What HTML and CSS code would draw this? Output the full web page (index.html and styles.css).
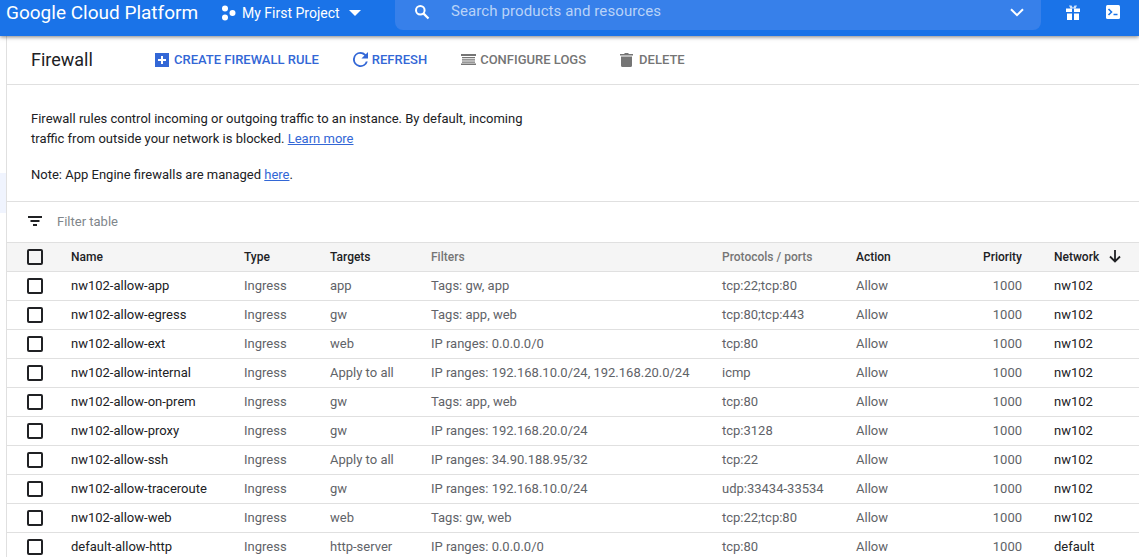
FILE: index.html
```html
<!DOCTYPE html>
<html lang="en">
<head>
    <meta charset="UTF-8">
    <meta name="viewport" content="width=device-width, initial-scale=1.0">
    <title>Firewall</title>
    <link rel="stylesheet" href="styles.css">
</head>
<body>
    <header class="topbar">
        <span class="brand">Google Cloud Platform</span>
        <span class="project">
            <svg class="project-icon" width="18" height="18" viewBox="0 0 18 18"><circle cx="5" cy="4.5" r="3" fill="#fff"/><circle cx="12.5" cy="9" r="3" fill="#fff"/><circle cx="5" cy="13.5" r="3" fill="#fff"/></svg>
            <span class="project-name">My First Project</span>
            <svg class="project-caret" width="12" height="6" viewBox="0 0 12 6"><path d="M0 0h12L6 6z" fill="#fff"/></svg>
        </span>
        <div class="search">
            <svg class="search-icon" width="16" height="16" viewBox="0 0 16 16"><circle cx="6.3" cy="6.3" r="4.3" fill="none" stroke="#fff" stroke-width="2"/><path d="M9.6 9.6L14.5 14.5" stroke="#fff" stroke-width="2.2"/></svg>
            <span class="search-text">Search products and resources</span>
            <svg class="search-chevron" width="14" height="9" viewBox="0 0 14 9"><path d="M1 1.2l6 6 6-6" fill="none" stroke="#fff" stroke-width="2"/></svg>
        </div>
        <div class="topbar-icons">
            <svg width="14" height="15" viewBox="0 0 14 15"><path d="M0 3.5h6v3.5H0zM8 3.5h6v3.5H8zM1 8.5h5V15H1zM8 8.5h5V15H8z" fill="#fff"/><path d="M3 0.5h2.5l1.5 2.5 1.5-2.5H11L9.5 3.5h-5z" fill="#fff" opacity="0.8"/></svg>
            <svg width="14" height="14" viewBox="0 0 14 14"><rect width="14" height="14" rx="1.5" fill="#fff"/><path d="M2.5 4l3 3-3 3" fill="none" stroke="#1a73e8" stroke-width="1.6"/><path d="M7.5 9.5h4" stroke="#1a73e8" stroke-width="1.5"/></svg>
        </div>
    </header>

    <div class="layout">
        <nav class="sidenav"><div class="sidenav-active"></div></nav>
        <main class="content">
            <div class="toolbar">
                <h1 class="page-title">Firewall</h1>
                <a class="action action-create">
                    <svg width="14" height="14" viewBox="0 0 14 14"><rect width="14" height="14" fill="#3367d6"/><path d="M7 3v8M3 7h8" stroke="#fff" stroke-width="2"/></svg>
                    CREATE FIREWALL RULE
                </a>
                <a class="action action-refresh">
                    <svg width="15" height="15" viewBox="4 4 16 16"><path d="M17.65 6.35A7.96 7.96 0 0 0 12 4a8 8 0 1 0 7.73 10h-2.08A6 6 0 1 1 12 6c1.66 0 3.14.69 4.22 1.78L13 11h7V4z" fill="#3367d6"/></svg>
                    REFRESH
                </a>
                <a class="action action-logs">
                    <svg width="15" height="11" viewBox="0 0 15 11"><path d="M0 0h15v2H0zM1 3h13v1.3H1zM1 5.3h13v1.3H1zM1 7.5h13v1.3H1zM0 9.5h15V11H0z" fill="#757575"/></svg>
                    CONFIGURE LOGS
                </a>
                <a class="action action-delete">
                    <svg width="13" height="14" viewBox="0 0 13 14"><path d="M1 3.5h11v9a1.5 1.5 0 0 1-1.5 1.5h-8A1.5 1.5 0 0 1 1 12.5zM0 1h4l1-1h3l1 1h4v1.5H0z" fill="#757575"/></svg>
                    DELETE
                </a>
            </div>

            <section class="intro">
                <p>Firewall rules control incoming or outgoing traffic to an instance. By default, incoming<br>traffic from outside your network is blocked. <a href="#">Learn more</a></p>
                <p class="note">Note: App Engine firewalls are managed <a href="#">here</a>.</p>
            </section>

            <div class="filter">
                <svg width="14" height="10" viewBox="0 0 14 10"><path d="M0 0h14v2H0zM2.5 4h9v2h-9zM5 8h4v2H5z" fill="#202124"/></svg>
                <span>Filter table</span>
            </div>

            <table class="rules">
                <thead>
                    <tr>
                        <th class="col-check"><span class="checkbox"></span></th>
                        <th class="col-name">Name</th>
                        <th class="col-type">Type</th>
                        <th class="col-targets">Targets</th>
                        <th class="col-filters muted-head">Filters</th>
                        <th class="col-ports muted-head">Protocols / ports</th>
                        <th class="col-action">Action</th>
                        <th class="col-priority">Priority</th>
                        <th class="col-network">Network
                            <svg class="sort-arrow" width="12" height="13" viewBox="0 0 12 13"><path d="M6 0v11.500M1 6.500l5 5 5-5" fill="none" stroke="#202124" stroke-width="1.8"/></svg>
                        </th>
                    </tr>
                </thead>
                <tbody id="ruleRows"></tbody>
            </table>
        </main>
    </div>

    <script>
        let rules = [
            ["nw102-allow-app", "app", "Tags: gw, app", "tcp:22;tcp:80", "nw102"],
            ["nw102-allow-egress", "gw", "Tags: app, web", "tcp:80;tcp:443", "nw102"],
            ["nw102-allow-ext", "web", "IP ranges: 0.0.0.0/0", "tcp:80", "nw102"],
            ["nw102-allow-internal", "Apply to all", "IP ranges: 192.168.10.0/24, 192.168.20.0/24", "icmp", "nw102"],
            ["nw102-allow-on-prem", "gw", "Tags: app, web", "tcp:80", "nw102"],
            ["nw102-allow-proxy", "gw", "IP ranges: 192.168.20.0/24", "tcp:3128", "nw102"],
            ["nw102-allow-ssh", "Apply to all", "IP ranges: 34.90.188.95/32", "tcp:22", "nw102"],
            ["nw102-allow-traceroute", "gw", "IP ranges: 192.168.10.0/24", "udp:33434-33534", "nw102"],
            ["nw102-allow-web", "web", "Tags: gw, web", "tcp:22;tcp:80", "nw102"],
            ["default-allow-http", "http-server", "IP ranges: 0.0.0.0/0", "tcp:80", "default"]
        ];

        let rows = "";
        for (let i = 0; i < rules.length; i++) {
            let r = rules[i];
            rows += `<tr>
                <td class="cell-check"><span class="checkbox"></span></td>
                <td class="strong">${r[0]}</td>
                <td>Ingress</td>
                <td>${r[1]}</td>
                <td>${r[2]}</td>
                <td>${r[3]}</td>
                <td>Allow</td>
                <td class="col-priority">1000</td>
                <td class="strong col-network">${r[4]}</td>
            </tr>`;
        }
        document.getElementById("ruleRows").innerHTML = rows;
    </script>
</body>
</html>
```

FILE: styles.css
```css
html, body {
    height: 100%;
}

body {
    font-family: Roboto, "Liberation Sans", sans-serif;
    font-size: 13px;
    color: #202124;
    background-color: #fff;
    margin: 0;
    padding: 0;
    overflow: hidden;
}

.topbar {
    display: flex;
    align-items: flex-start;
    height: 36px;
    background-color: #1a73e8;
    color: #fff;
    box-shadow: 0 1px 4px rgba(0, 0, 0, 0.5);
    position: relative;
}

.brand {
    width: 220px;
    padding: 1px 0 0 6px;
    box-sizing: border-box;
    font-size: 19px;
    line-height: 24px;
}

.project {
    display: flex;
    align-items: center;
    width: 175px;
    height: 26px;
}

.project-icon {
    margin-right: 4px;
}

.project-name {
    font-size: 14px;
    margin-right: 9px;
}

.search {
    display: flex;
    align-items: center;
    width: 646px;
    height: 30px;
    padding: 0 17px 6px 19px;
    box-sizing: border-box;
    background-color: #3780ea;
    border-radius: 0 0 8px 8px;
}

.search-icon {
    margin-right: 21px;
}

.search-text {
    flex: 1;
    font-size: 15px;
    letter-spacing: 0.1px;
    color: #b9d3f8;
    margin-top: -2px;
}

.topbar-icons {
    display: flex;
    gap: 26px;
    margin-left: 25px;
    padding-top: 5px;
}

.layout {
    display: flex;
}

.sidenav {
    width: 6px;
    height: 521px;
    flex-shrink: 0;
    border-right: 1px solid #e0e0e0;
    padding-top: 137px;
    box-sizing: content-box;
}

.sidenav-active {
    height: 40px;
    background-color: #f0f4fe;
}

.content {
    flex: 1;
    min-width: 0;
}

.toolbar {
    display: flex;
    align-items: center;
    height: 47px;
    padding: 0 0 1px 24px;
    border-bottom: 1px solid #e0e0e0;
}

.page-title {
    width: 124px;
    margin: 0;
    font-size: 18px;
    font-weight: 400;
}

.action {
    display: flex;
    align-items: center;
    gap: 4px;
    font-size: 13px;
    font-weight: 500;
    margin-right: 34px;
}

.action-create, .action-refresh {
    color: #3367d6;
}

.action-create {
    gap: 5px;
}

.action-logs, .action-delete {
    color: #757575;
}

.action-delete {
    gap: 6px;
}

.intro {
    height: 117px;
    padding: 24px 24px 0;
    box-sizing: border-box;
    border-bottom: 1px solid #e0e0e0;
    line-height: 20px;
}

.intro p {
    margin: 0;
}

.intro .note {
    margin-top: 16px;
}

.intro a {
    color: #3367d6;
    text-decoration: underline;
}

.filter {
    display: flex;
    align-items: center;
    height: 40px;
    padding: 0 0 2px 21px;
    box-sizing: border-box;
    color: #80868b;
}

.filter span {
    margin-left: 15px;
}

.rules {
    width: 1132px;
    table-layout: fixed;
    border-collapse: collapse;
}

.rules th, .rules td {
    padding: 0;
    text-align: left;
    border-bottom: 1px solid #e0e0e0;
    white-space: nowrap;
    color: #5f6368;
}

.rules th {
    height: 28px;
    font-weight: 500;
    color: #202124;
    font-size: 12px;
    background-color: #f5f5f5;
    border-top: 1px solid #e0e0e0;
}

.rules td {
    height: 26px;
    padding-bottom: 2px;
}

.rules td.cell-check {
    height: 28px;
    padding-bottom: 0;
}

.rules th.muted-head {
    color: #757575;
}

.rules td.strong {
    color: #202124;
}

.col-check {
    width: 64px;
}

.col-name {
    width: 173px;
}

.col-type {
    width: 86px;
}

.col-targets {
    width: 101px;
}

.col-filters {
    width: 291px;
}

.col-ports {
    width: 134px;
}

.col-action {
    width: 100px;
}

.col-priority {
    width: 66px;
}

.rules th.col-priority, .rules td.col-priority {
    text-align: right;
}

.rules th.col-network, .rules td.col-network {
    padding-left: 32px;
}

.sort-arrow {
    margin-left: 7px;
    vertical-align: -2px;
}

.checkbox {
    display: block;
    width: 12px;
    height: 12px;
    margin-left: 20px;
    border: 2px solid #202124;
    border-radius: 2px;
}
```
